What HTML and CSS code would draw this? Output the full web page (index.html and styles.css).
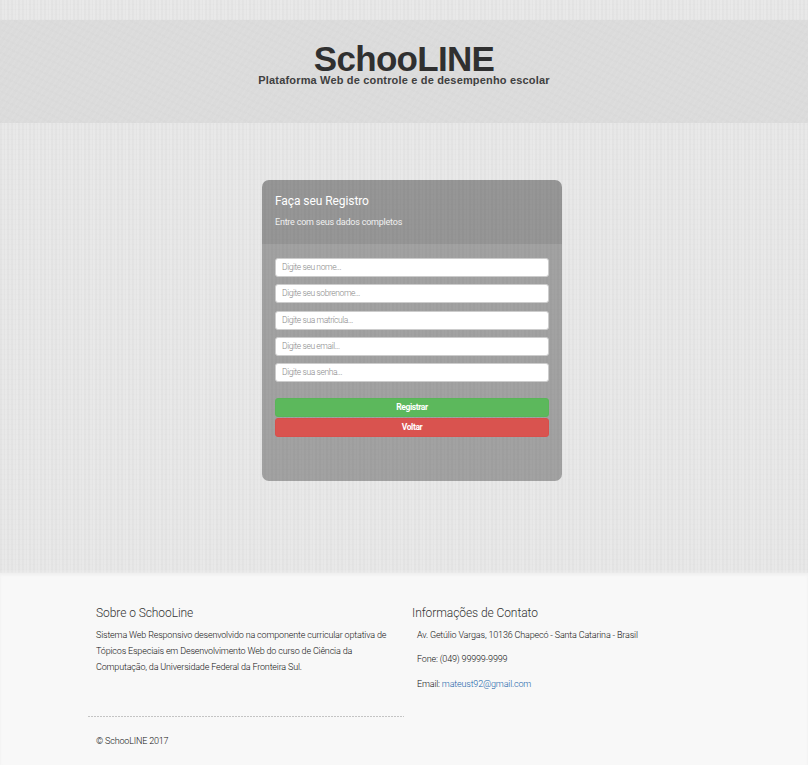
FILE: index.html
```html
<!DOCTYPE html>
<html lang="pt-BR">
<head>
<meta charset="utf-8">
<title>SchooLINE</title>
<link rel="stylesheet" href="styles.css">
</head>
<body>
<header class="site-header">
  <h1 class="brand">SchooLINE</h1>
  <p class="tagline">Plataforma Web de controle e de desempenho escolar</p>
</header>
<main class="main">
  <section class="panel">
    <div class="panel-head">
      <h2 class="panel-title">Faça seu Registro</h2>
      <p class="panel-sub">Entre com seus dados completos</p>
    </div>
    <form class="form">
      <input class="field" type="text" placeholder="Digite seu nome...">
      <input class="field" type="text" placeholder="Digite seu sobrenome...">
      <input class="field" type="text" placeholder="Digite sua matrícula...">
      <input class="field" type="text" placeholder="Digite seu email...">
      <input class="field" type="password" placeholder="Digite sua senha...">
      <div class="actions">
        <button class="btn btn-green" type="button">Registrar</button>
        <button class="btn btn-red" type="button">Voltar</button>
      </div>
    </form>
  </section>
</main>
<footer class="footer">
  <div class="columns">
    <section class="about">
      <h3 class="foot-title">Sobre o SchooLine</h3>
      <p class="about-text">Sistema Web Responsivo desenvolvido na componente curricular optativa de<br>Tópicos Especiais em Desenvolvimento Web do curso de Ciência da<br>Computação, da Universidade Federal da Fronteira Sul.</p>
    </section>
    <section class="contact">
      <h3 class="foot-title contact-title">Informações de Contato</h3>
      <ul class="contact-list">
        <li class="address">Av. Getúlio Vargas, 10136 Chapecó - Santa Catarina - Brasil</li>
        <li>Fone: (049) 99999-9999</li>
        <li>Email: <a class="mail" href="#">mateust92@gmail.com</a></li>
      </ul>
    </section>
  </div>
  <p class="copyright">© SchooLINE 2017</p>
</footer>
</body>
</html>
```
FILE: styles.css
```css
* { box-sizing: border-box; }
body {
  margin: 0;
  height: 765px;
  padding-top: 20px;
  overflow: hidden;
  font-family: Roboto, "Liberation Sans", sans-serif;
  font-size: 9px;
  font-weight: 300;
  letter-spacing: -.175px;
  color: #111;
  background:
    repeating-linear-gradient(90deg, rgba(0,0,0,.008) 0 2px, rgba(255,255,255,.12) 2px 4px, rgba(0,0,0,.004) 4px 5px, rgba(255,255,255,.14) 5px 7px, rgba(0,0,0,.006) 7px 9px, rgba(255,255,255,.1) 9px 11px),
    repeating-linear-gradient(0deg, rgba(0,0,0,.006) 0 1px, transparent 1px 5px),
    #e5e5e5;
}
h1, h2, h3, p, ul { margin: 0; padding: 0; }
.site-header {
  height: 103px;
  padding-top: 20px;
  text-align: center;
  font-family: "Liberation Sans", Arial, sans-serif;
  background:
    repeating-linear-gradient(125deg, rgba(255,255,255,.06) 0 2px, transparent 2px 5px),
    repeating-linear-gradient(25deg, rgba(0,0,0,.006) 0 2px, transparent 2px 7px),
    #dbdbdb;
}
.brand { font-size: 35px; line-height: 38px; font-weight: 700; letter-spacing: -.7px; color: #303030; }
.tagline { font-size: 11px; line-height: 13px; margin-top: -4px; font-weight: 700; letter-spacing: .17px; color: #404040; }
.main { height: 450px; padding: 57px 0 0 262px; }
.panel {
  width: 300px;
  height: 301px;
  border-radius: 7px;
  overflow: hidden;
  background: rgba(0,0,0,.3);
}
.panel-head { height: 64px; padding: 13px 13px 0; color: #fff; background: rgba(0,0,0,.07); }
.panel-title { font-size: 12px; line-height: 16px; font-weight: 400; letter-spacing: -.08px; }
.panel-sub { font-size: 9px; line-height: 12px; margin-top: 7px; font-weight: 400; letter-spacing: -.22px; color: #f0f0f0; }
.form { display: flex; flex-direction: column; gap: 7.3px; padding: 14px 13px 0; }
.field {
  display: block;
  width: 100%;
  height: 19px;
  padding: 0 6px 1px;
  border: 1px solid #ccc;
  border-radius: 3px;
  background: #fff;
  font: 300 8.5px/16px Roboto, sans-serif;
  letter-spacing: -.4px;
}
.field::placeholder { color: #888; opacity: 1; }
.actions { display: grid; gap: 1px; margin-top: 8.5px; }
.btn {
  height: 19.2px;
  padding: 0 0 2px;
  border: 1px solid;
  border-radius: 3px;
  color: #fff;
  font: 700 8.5px/14px Roboto, sans-serif;
  letter-spacing: -.4px;
}
.btn-green { background: #5cb85c; border-color: #59b559; }
.btn-red { background: #d9534f; border-color: #d74f4b; }
.footer {
  height: 192px;
  padding: 32px 88px 0;
  background: #f8f8f8;
  box-shadow: 0 0 4px #f0f0f0, inset 0 2px 3px #efefef;
}
.columns { display: grid; grid-template-columns: 316px 1fr; }
.about {
  height: 112px;
  padding-left: 8px;
  background: repeating-linear-gradient(90deg, #c4c4c4 0 2px, transparent 2px 3px) 0 100% / 100% 1px no-repeat;
}
.contact { padding-left: 8px; }
.foot-title { font-size: 12px; line-height: 16px; font-weight: 300; letter-spacing: -.07px; color: #333; }
.about-text { margin-top: 6px; line-height: 16px; white-space: nowrap; }
.contact-list { list-style: none; margin: 7px 0 0 5px; }
.contact-list li { height: 25px; line-height: 14px; }
.contact-list .address { height: 24px; }
.mail { color: #1763a8; text-decoration: none; }
.copyright { margin: 17px 0 0 8px; line-height: 14px; }
```
